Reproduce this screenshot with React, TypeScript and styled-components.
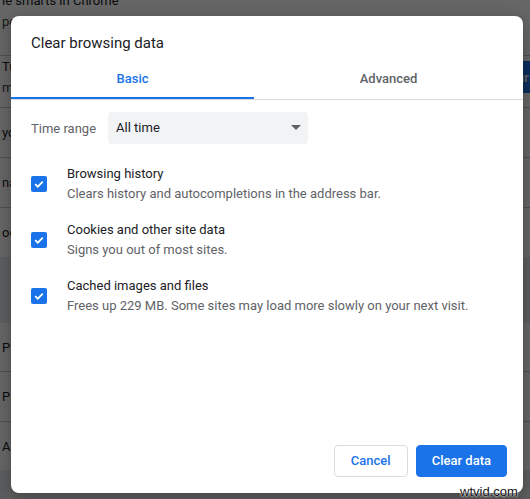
import React from "react";
import styled, { createGlobalStyle } from "styled-components";

const Global = createGlobalStyle`
  html, body { margin: 0; padding: 0; }
  body { font-family: Roboto, "Noto Sans", Arial, sans-serif; overflow: hidden; }
  * { box-sizing: border-box; }
`;

const Viewport = styled.div`
  position: relative;
  width: 530px;
  height: 499px;
  overflow: hidden;
  background: #e8eaed;
`;

const Page = styled.div`
  display: flex;
  flex-direction: column;
  gap: 66px;
  margin-top: -8px;
`;

const Card = styled.div`
  background: #ffffff;
  display: flex;
  flex-direction: column;
`;

const BgRow = styled.div<{ $h: number; $top?: number }>`
  height: ${(p) => p.$h}px;
  border-bottom: 1px solid #c4c7cc;
  display: flex;
  align-items: ${(p) => (p.$top !== undefined ? "flex-start" : "center")};
  justify-content: space-between;
  padding: ${(p) => (p.$top !== undefined ? `${p.$top}px 0 0 2px` : "0 0 0 2px")};
  font-size: 13px;
  color: #202124;
  &:last-child { border-bottom: none; }
`;

const BgText = styled.div`
  display: flex;
  flex-direction: column;
  gap: 4px;
  line-height: 17px;
  white-space: nowrap;
`;

const BgSub = styled.span`
  color: #3c4043;
`;

const BgButton = styled.div`
  height: 32px;
  margin-top: 3px;
  padding: 0 16px;
  border-radius: 4px;
  background: #1a73e8;
  color: #ffffff;
  font-weight: 500;
  font-size: 13px;
  display: flex;
  align-items: center;
  margin-right: -40px;
`;

const Scrim = styled.div`
  position: absolute;
  inset: 0;
  background: rgba(0, 0, 0, 0.6);
`;

const Dialog = styled.div`
  position: absolute;
  left: 11px;
  top: 16px;
  width: 512px;
  height: 477px;
  background: #ffffff;
  border-radius: 8px;
  box-shadow: 0 4px 16px rgba(0, 0, 0, 0.3);
  display: flex;
  flex-direction: column;
  overflow: hidden;
`;

const Title = styled.h2`
  margin: 0;
  padding: 17px 20px 6px;
  font-size: 15px;
  line-height: 20px;
  font-weight: 400;
  color: #202124;
`;

const TabBar = styled.div`
  display: flex;
  border-bottom: 1px solid #dadce0;
`;

const Tab = styled.div<{ $active?: boolean; $w?: number }>`
  flex: ${(p) => (p.$w ? `0 0 ${p.$w}px` : "1")};
  height: 40px;
  display: flex;
  align-items: center;
  justify-content: center;
  padding-top: 1px;
  font-size: 13px;
  font-weight: 500;
  color: ${(p) => (p.$active ? "#1a73e8" : "#5f6368")};
  border-bottom: 2px solid ${(p) => (p.$active ? "#1a73e8" : "transparent")};
`;

const Body = styled.div`
  padding: 12px 20px 0;
  display: flex;
  flex-direction: column;
`;

const RangeRow = styled.div`
  display: flex;
  align-items: center;
  gap: 12px;
  margin-bottom: 12px;
`;

const Label = styled.span`
  font-size: 13px;
  color: #5f6368;
`;

const Select = styled.div`
  width: 200px;
  height: 32px;
  border-radius: 4px;
  background: #f1f3f4;
  display: flex;
  align-items: center;
  justify-content: space-between;
  padding: 0 6px 1px 8px;
  font-size: 13px;
  color: #202124;
`;

const Row = styled.div`
  display: flex;
  align-items: center;
  gap: 20px;
  padding: 8px 0;
`;

const Check = styled.div`
  width: 16px;
  height: 16px;
  border-radius: 2px;
  background: #1a73e8;
  display: flex;
  align-items: center;
  justify-content: center;
  flex-shrink: 0;
`;

const RowText = styled.div`
  display: flex;
  flex-direction: column;
  line-height: 20px;
  font-size: 13px;
`;

const RowTitle = styled.span`
  color: #202124;
`;

const RowSub = styled.span`
  color: #5f6368;
`;

const Footer = styled.div`
  margin-top: auto;
  display: flex;
  justify-content: flex-end;
  gap: 8px;
  padding: 0 16px 16px;
`;

const Button = styled.button<{ $primary?: boolean }>`
  height: 32px;
  padding: 0 15px 1px;
  border-radius: 4px;
  font-family: inherit;
  font-size: 13px;
  font-weight: 500;
  border: 1px solid ${(p) => (p.$primary ? "#1a73e8" : "#dadce0")};
  background: ${(p) => (p.$primary ? "#1a73e8" : "#ffffff")};
  color: ${(p) => (p.$primary ? "#ffffff" : "#1a73e8")};
  min-width: 74px;
`;

const Watermark = styled.div`
  position: absolute;
  left: 460px;
  top: 484px;
  font-family: "Liberation Sans", Arial, sans-serif;
  font-size: 13px;
  color: #111;
  text-shadow: 0 0 2px #fff, 0 0 2px #fff;
`;

const CheckMark = () => (
  <svg width="12" height="12" viewBox="0 0 12 12">
    <path d="M2.2 6.2 L4.8 8.7 L9.8 3.6" fill="none" stroke="#fff" strokeWidth="1.8" />
  </svg>
);

const items = [
  { t: "Browsing history", s: "Clears history and autocompletions in the address bar." },
  { t: "Cookies and other site data", s: "Signs you out of most sites." },
  { t: "Cached images and files", s: "Frees up 229 MB. Some sites may load more slowly on your next visit." },
];

export default function App() {
  return (
    <>
      <Global />
      <Viewport>
        <Page>
          <Card>
            <BgRow $h={64} $top={0}>
              <BgText>
                <span>le smarts in Chrome</span>
                <BgSub>personalized for you</BgSub>
              </BgText>
            </BgRow>
            <BgRow $h={52} $top={2}>
              <BgText>
                <span>Turn on sync to get your stuff on all devices</span>
                <BgSub>mark and manage passwords</BgSub>
              </BgText>
              <BgButton>Turn on</BgButton>
            </BgRow>
            <BgRow $h={50}>
              <BgText><span>your Google Account</span></BgText>
            </BgRow>
            <BgRow $h={50}>
              <BgText><span>name and picture</span></BgText>
            </BgRow>
            <BgRow $h={49}>
              <BgText><span>ookmarks and settings</span></BgText>
            </BgRow>
          </Card>
          <Card>
            <BgRow $h={49}>
              <BgText><span>Passwords</span></BgText>
            </BgRow>
            <BgRow $h={50}>
              <BgText><span>Payment methods</span></BgText>
            </BgRow>
            <BgRow $h={48}>
              <BgText><span>Addresses and more</span></BgText>
            </BgRow>
          </Card>
        </Page>
        <Scrim />
        <Dialog>
          <Title>Clear browsing data</Title>
          <TabBar>
            <Tab $active $w={243}>Basic</Tab>
            <Tab>Advanced</Tab>
          </TabBar>
          <Body>
            <RangeRow>
              <Label>Time range</Label>
              <Select>
                <span>All time</span>
                <svg width="12" height="6" viewBox="0 0 12 6">
                  <path d="M1 0 L11 0 L6 5 Z" fill="#5f6368" />
                </svg>
              </Select>
            </RangeRow>
            {items.map((it) => (
              <Row key={it.t}>
                <Check><CheckMark /></Check>
                <RowText>
                  <RowTitle>{it.t}</RowTitle>
                  <RowSub>{it.s}</RowSub>
                </RowText>
              </Row>
            ))}
          </Body>
          <Footer>
            <Button>Cancel</Button>
            <Button $primary>Clear data</Button>
          </Footer>
        </Dialog>
        <Watermark>wtvid.com</Watermark>
      </Viewport>
    </>
  );
}
